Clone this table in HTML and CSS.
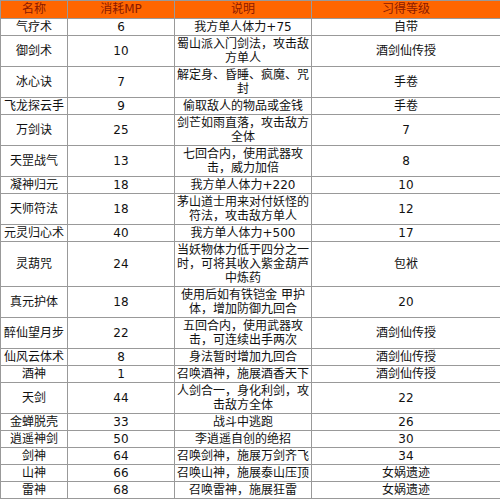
FILE: index.html
```html
<!DOCTYPE html>
<html lang="zh">
<head>
<meta charset="utf-8">
<link rel="stylesheet" href="styles.css">
</head>
<body>
<table class="skills">
  <colgroup>
    <col class="c-name">
    <col class="c-mp">
    <col class="c-desc">
    <col class="c-lvl">
  </colgroup>
  <thead>
    <tr><th>名称</th><th>消耗MP</th><th>说明</th><th>习得等级</th></tr>
  </thead>
  <tbody>
    <tr><td>气疗术</td><td>6</td><td>我方单人体力+75</td><td>自带</td></tr>
    <tr><td>御剑术</td><td>10</td><td>蜀山派入门剑法，攻击敌方单人</td><td>酒剑仙传授</td></tr>
    <tr><td>冰心诀</td><td>7</td><td>解定身、昏睡、疯魔、咒封</td><td>手卷</td></tr>
    <tr><td>飞龙探云手</td><td>9</td><td>偷取敌人的物品或金钱</td><td>手卷</td></tr>
    <tr><td>万剑诀</td><td>25</td><td>剑芒如雨直落，攻击敌方全体</td><td>7</td></tr>
    <tr><td>天罡战气</td><td>13</td><td>七回合内，使用武器攻击，威力加倍</td><td>8</td></tr>
    <tr><td>凝神归元</td><td>18</td><td>我方单人体力+220</td><td>10</td></tr>
    <tr><td>天师符法</td><td>18</td><td>茅山道士用来对付妖怪的符法，攻击敌方单人</td><td>12</td></tr>
    <tr><td>元灵归心术</td><td>40</td><td>我方单人体力+500</td><td>17</td></tr>
    <tr><td>灵葫咒</td><td>24</td><td>当妖物体力低于四分之一时，可将其收入紫金葫芦中炼药</td><td>包袱</td></tr>
    <tr><td>真元护体</td><td>18</td><td>使用后如有铁铠金 甲护体，增加防御九回合</td><td>20</td></tr>
    <tr><td>醉仙望月步</td><td>22</td><td>五回合内，使用武器攻击，可连续出手两次</td><td>酒剑仙传授</td></tr>
    <tr><td>仙风云体术</td><td>8</td><td>身法暂时增加九回合</td><td>酒剑仙传授</td></tr>
    <tr><td>酒神</td><td>1</td><td>召唤酒神，施展酒香天下</td><td>酒剑仙传授</td></tr>
    <tr><td>天剑</td><td>44</td><td>人剑合一，身化利剑，攻击敌方全体</td><td>22</td></tr>
    <tr><td>金蝉脱壳</td><td>33</td><td>战斗中逃跑</td><td>26</td></tr>
    <tr><td>逍遥神剑</td><td>50</td><td>李逍遥自创的绝招</td><td>30</td></tr>
    <tr><td>剑神</td><td>64</td><td>召唤剑神，施展万剑齐飞</td><td>34</td></tr>
    <tr><td>山神</td><td>66</td><td>召唤山神，施展泰山压顶</td><td>女娲遗迹</td></tr>
    <tr><td>雷神</td><td>68</td><td>召唤雷神，施展狂雷</td><td>女娲遗迹</td></tr>
  </tbody>
</table>
</body>
</html>
```
FILE: styles.css
```css
html, body {
  margin: 0;
  padding: 0;
  background: #ffffff;
}

.skills {
  border-collapse: collapse;
  table-layout: fixed;
  width: 500px;
  font-family: "DejaVu Sans", "Noto Sans CJK SC", sans-serif;
  font-size: 12px;
  color: #111;
}

.c-name { width: 67px; }
.c-mp { width: 107px; }
.c-desc { width: 137px; }
.c-lvl { width: 189px; }

.skills th,
.skills td {
  border: 1px solid #999;
  text-align: center;
  vertical-align: middle;
  padding: 1px 2px;
  line-height: 14px;
  font-weight: normal;
}

.skills th {
  background: #ff6600;
  color: #8b1a00;
  line-height: 15px;
}
```
